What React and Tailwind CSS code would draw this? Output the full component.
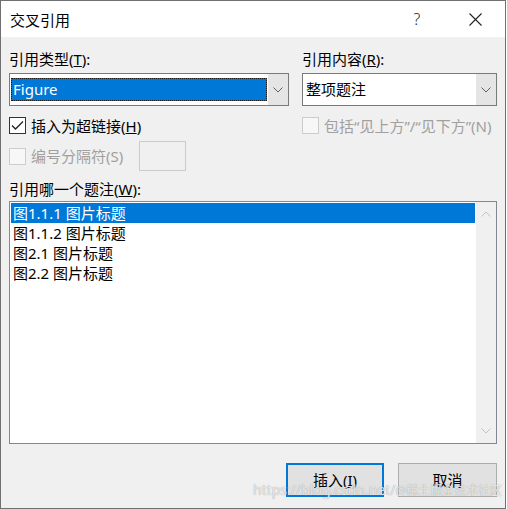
import React from "react";

const font = {
  fontFamily: '"Noto Sans", "Noto Sans CJK SC", sans-serif',
};

function Chevron({ down = true, color = "#606060" }) {
  return (
    <svg width="10" height="6" viewBox="0 0 10 6">
      <polyline
        points={down ? "0.5,0.5 5,5 9.5,0.5" : "0.5,5.5 5,1 9.5,5.5"}
        fill="none"
        stroke={color}
        strokeWidth="1"
      />
    </svg>
  );
}

function CheckBox({ checked, disabled }) {
  return (
    <div
      className={
        "w-[17px] h-[17px] flex items-center justify-center shrink-0 " +
        (disabled ? "border border-[#cccccc] bg-[#f7f7f7]" : "border border-[#333333] bg-white")
      }
    >
      {checked && (
        <svg width="13" height="11" viewBox="0 0 13 11">
          <polyline points="1,5.5 4.5,9 12,1.5" fill="none" stroke="#222" strokeWidth="1.3" />
        </svg>
      )}
    </div>
  );
}

const captions = ["图1.1.1 图片标题", "图1.1.2 图片标题", "图2.1 图片标题", "图2.2 图片标题"];

export default function App() {
  return (
    <div className="relative w-[507px] h-[509px] bg-white text-[15px] text-black" style={font}>
      <div className="w-[506px] h-[509px] border border-[#707070] flex flex-col bg-[#f0f0f0]">
        {/* title bar */}
        <div className="h-[36px] bg-white flex items-center pl-[9px] shrink-0">
          <span className="flex-1 leading-[20px] pt-[1px]">交叉引用</span>
          <span className="w-[14px] text-center text-[16px] font-light text-[#222] mr-[45px]">?</span>
          <svg width="13" height="13" viewBox="0 0 13 13" className="mr-[23px]">
            <path d="M0.5 0.5 L12.5 12.5 M12.5 0.5 L0.5 12.5" stroke="#222" strokeWidth="1.1" />
          </svg>
        </div>

        {/* body */}
        <div className="px-[8px] flex flex-col">
          <div className="flex gap-[13px] pt-[12px]">
            <div className="w-[280px] flex flex-col">
              <div className="h-[20px] leading-[20px]">
                引用类型(<span className="underline">T</span>):
              </div>
              <div className="mt-[4px] h-[33px] border border-[#7a7a7a] bg-white flex">
                <div className="flex-1 flex items-center px-[1px]">
                  <div className="w-full h-[23px] bg-[#0078d7] text-white leading-[23px] pl-[2px] outline-1 outline-dotted outline-[#1a1a1a] -outline-offset-1">
                    Figure
                  </div>
                </div>
                <div className="w-[20px] bg-[#e5e5e5] flex items-center justify-center">
                  <Chevron />
                </div>
              </div>
              <div className="mt-[11px] h-[17px] flex items-center gap-[5px]">
                <CheckBox checked />
                <span className="leading-[20px]">
                  插入为超链接(<span className="underline">H</span>)
                </span>
              </div>
            </div>
            <div className="w-[195px] flex flex-col">
              <div className="h-[20px] leading-[20px]">
                引用内容(<span className="underline">R</span>):
              </div>
              <div className="mt-[4px] h-[33px] border border-[#7a7a7a] bg-white flex">
                <div className="flex-1 flex items-center pl-[3px]">整项题注</div>
                <div className="w-[20px] bg-[#e5e5e5] flex items-center justify-center">
                  <Chevron />
                </div>
              </div>
              <div className="mt-[11px] h-[17px] flex items-center gap-[5px] text-[#a0a0a0]">
                <CheckBox disabled />
                <span className="leading-[20px] whitespace-nowrap">包括“见上方”/“见下方”(N)</span>
              </div>
            </div>
          </div>

          <div className="mt-[7px] h-[30px] flex items-center text-[#a0a0a0]">
            <CheckBox disabled />
            <span className="ml-[5px] leading-[20px]">编号分隔符(S)</span>
            <div className="ml-[16px] w-[47px] h-[30px] border border-[#cccccc] bg-[#f0f0f0]" />
          </div>

          <div className="mt-[8px] h-[20px] leading-[20px]">
            引用哪一个题注(<span className="underline">W</span>):
          </div>

          <div className="mt-[2px] h-[243px] border border-[#828790] bg-white flex">
            <div className="flex-1 p-[1px] flex flex-col">
              {captions.map((c, i) => (
                <div
                  key={c}
                  className={
                    "h-[20px] leading-[20px] pl-[2px] " +
                    (i === 0 ? "bg-[#0078d7] text-white" : "text-black")
                  }
                >
                  {c}
                </div>
              ))}
            </div>
            <div className="w-[20px] bg-[#f0f0f0] flex flex-col items-center justify-between pt-[9px] pb-[9px]">
              <Chevron down={false} color="#c2c2c2" />
              <Chevron color="#c2c2c2" />
            </div>
          </div>

          <div className="mt-[19px] flex justify-end gap-[14px]">
            <button className="w-[98px] h-[34px] border-2 border-[#0078d7] bg-[#e1e1e1] leading-[20px]">
              插入(<span className="underline">I</span>)
            </button>
            <button className="w-[99px] h-[34px] border border-[#adadad] bg-[#e1e1e1] leading-[20px]">
              取消
            </button>
          </div>
        </div>
      </div>

      {/* watermark */}
      <div className="absolute left-[253px] top-[481px] flex items-end whitespace-nowrap text-white/75 [text-shadow:0_0_1px_#8a8a8a] pointer-events-none">
        <span className="text-[14px] leading-[18px]">https://blog.csdn.net/</span>
        <span className="text-[12px] leading-[16px]">@稀土掘金技术社区</span>
      </div>
    </div>
  );
}
